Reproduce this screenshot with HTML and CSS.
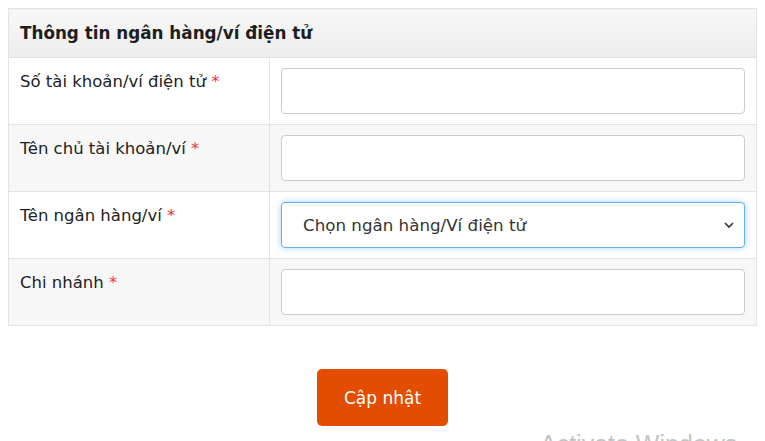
FILE: index.html
```html
<!DOCTYPE html>
<html lang="vi">
<head>
    <meta charset="UTF-8">
    <title>Thông tin ngân hàng</title>
    <link rel="stylesheet" href="styles.css">
</head>
<body>
    <table class="bank-table">
        <tr>
            <th colspan="2">Thông tin ngân hàng/ví điện tử</th>
        </tr>
        <tr>
            <td class="label">Số tài khoản/ví điện tử <span class="req">*</span></td>
            <td class="field"><input type="text" class="form-input"></td>
        </tr>
        <tr class="alt">
            <td class="label">Tên chủ tài khoản/ví <span class="req">*</span></td>
            <td class="field"><input type="text" class="form-input"></td>
        </tr>
        <tr>
            <td class="label">Tên ngân hàng/ví <span class="req">*</span></td>
            <td class="field">
                <div class="select-box">
                    <span>Chọn ngân hàng/Ví điện tử</span>
                    <svg width="12" height="8" viewBox="0 0 12 8"><path d="M2 2l4 4 4-4" fill="none" stroke="#333" stroke-width="1.6"/></svg>
                </div>
            </td>
        </tr>
        <tr class="alt">
            <td class="label">Chi nhánh <span class="req">*</span></td>
            <td class="field"><input type="text" class="form-input"></td>
        </tr>
    </table>

    <div class="actions">
        <button class="btn-update">Cập nhật</button>
    </div>

    <div class="watermark">Activate Windows</div>
</body>
</html>
```

FILE: styles.css
```css
body {
    margin: 8px;
    font-family: "DejaVu Sans", sans-serif;
    background: #fff;
    color: #222;
    overflow: hidden;
}
.bank-table {
    width: 749px;
    border-collapse: collapse;
    border: 1px solid #e3e3e3;
}
.bank-table th {
    text-align: left;
    font-size: 16.8px;
    font-weight: bold;
    height: 48px;
    padding: 0 11px;
    background: linear-gradient(#f8f8f8, #ececec);
    border-bottom: 1px solid #e3e3e3;
    color: #1e1e1e;
}
.bank-table td {
    border-top: 1px solid #e3e3e3;
    vertical-align: top;
    padding: 10px 11px;
}
.bank-table tr.alt td {
    background: #f7f7f7;
}
.label {
    width: 238px;
    font-size: 16.5px;
    padding-top: 14px !important;
    border-right: 1px solid #e3e3e3;
    color: #222;
}
.req {
    color: #e8334a;
}
.form-input {
    display: block;
    box-sizing: border-box;
    width: 464px;
    height: 46px;
    border: 1px solid #ccc;
    border-radius: 4px;
    background: #fff;
}
.select-box {
    box-sizing: border-box;
    width: 464px;
    height: 46px;
    border: 1px solid #66afe9;
    border-radius: 4px;
    background: #fff;
    box-shadow: 0 0 6px rgba(102,175,233,0.55);
    display: flex;
    align-items: center;
    justify-content: space-between;
    padding: 0 9px 0 21px;
    font-size: 16.7px;
    color: #333;
}
.actions {
    display: flex;
    justify-content: center;
    padding-top: 43px;
}
.btn-update {
    width: 131px;
    height: 57px;
    background: #e24d02;
    color: #fff;
    border: none;
    border-radius: 5px;
    font-family: "DejaVu Sans", sans-serif;
    font-size: 17px;
}
.watermark {
    position: absolute;
    left: 540px;
    top: 430px;
    font-family: "Liberation Sans", sans-serif;
    font-size: 25px;
    color: #c4c4c4;
}
```
